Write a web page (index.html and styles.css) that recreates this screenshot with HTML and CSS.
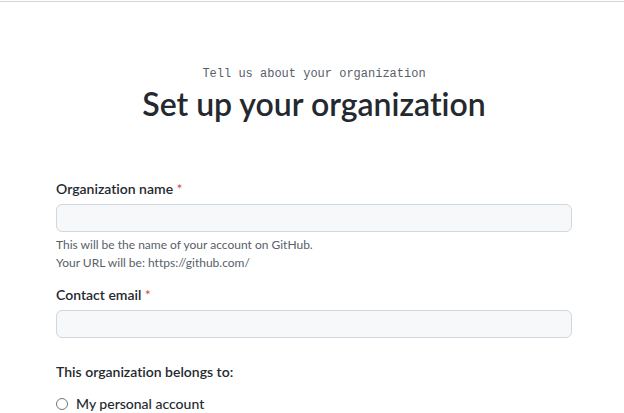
FILE: index.html
```html
<!DOCTYPE html>
<html>
<head>
<meta charset="utf-8">
<link rel="stylesheet" href="styles.css">
</head>
<body>
<div class="topline"></div>
<main class="page">
  <header class="head">
    <p class="kicker">Tell us about your organization</p>
    <h1 class="title">Set up your organization</h1>
  </header>
  <form class="form">
    <div class="field">
      <label class="label">Organization name <span class="req">*</span></label>
      <input class="input" type="text">
      <p class="note">This will be the name of your account on GitHub.<br>Your URL will be: https://github.com/</p>
    </div>
    <div class="field">
      <label class="label">Contact email <span class="req">*</span></label>
      <input class="input" type="text">
    </div>
    <p class="label belongs">This organization belongs to:</p>
    <label class="radio"><span class="dot"></span>My personal account</label>
  </form>
</main>
</body>
</html>
```
FILE: styles.css
```css
html, body { margin: 0; padding: 0; background: #fff; }
body { font-family: "Lato", "Noto Sans", sans-serif; color: #24292f; overflow: hidden; height: 413px; font-variant-ligatures: none; }
.topline { height: 1px; margin-top: 1px; background: #d0d7de; }
.page { width: 516px; margin-left: 56px; }
.head { text-align: center; padding-top: 64px; }
.kicker { margin: 0; font-family: "Liberation Mono", monospace; font-size: 12px; color: #57606a; line-height: 16px; }
.title { margin: 2px 0 0; font-size: 32px; font-weight: 600; line-height: 40px; color: #24292f; }
.form { margin-top: 55px; }
.field { margin-bottom: 13px; }
.field + .field { margin-bottom: 24px; }
.label { display: block; font-size: 14px; font-weight: 600; line-height: 20px; margin: 0 0 5px; }
.req { color: #c9504e; font-weight: 400; }
.input { display: block; box-sizing: border-box; width: 516px; height: 28px; margin: 0; background: #f6f8fa; border: 1px solid #d0d7de; border-radius: 6px; }
.note { margin: 4px 0 0; font-size: 12px; line-height: 18px; color: #57606a; }
.belongs { margin-top: 16px; }
.radio { display: flex; align-items: center; gap: 8px; margin-top: 13px; font-size: 14px; font-weight: 500; }
.dot { width: 10px; height: 10px; border: 1px solid #6e7781; border-radius: 50%; }
```
